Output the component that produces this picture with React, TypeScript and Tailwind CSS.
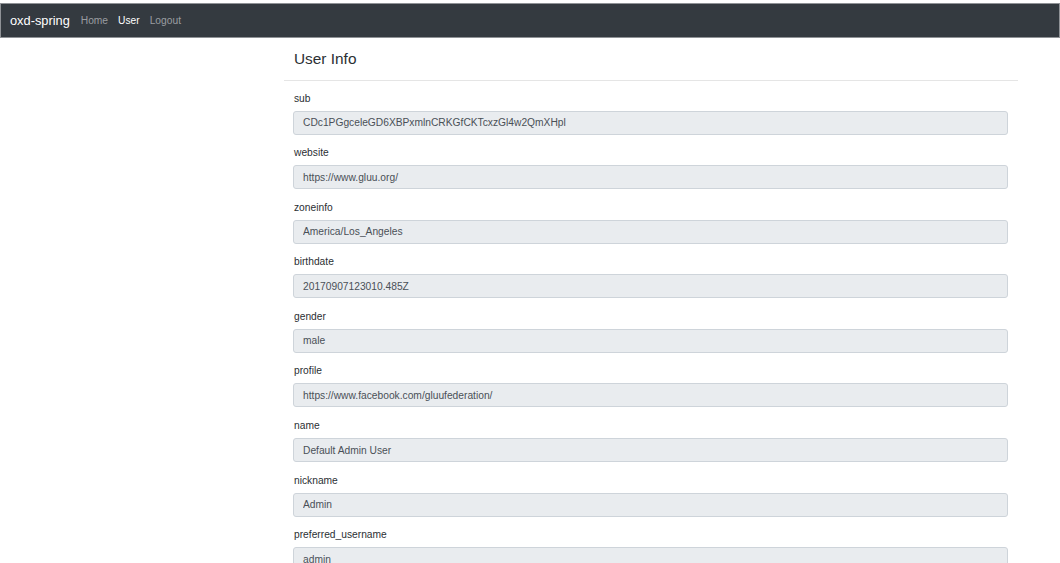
const fields: { label: string; value: string }[] = [
  { label: 'sub', value: 'CDc1PGgceleGD6XBPxmlnCRKGfCKTcxzGl4w2QmXHpl' },
  { label: 'website', value: 'https://www.gluu.org/' },
  { label: 'zoneinfo', value: 'America/Los_Angeles' },
  { label: 'birthdate', value: '20170907123010.485Z' },
  { label: 'gender', value: 'male' },
  { label: 'profile', value: 'https://www.facebook.com/gluufederation/' },
  { label: 'name', value: 'Default Admin User' },
  { label: 'nickname', value: 'Admin' },
  { label: 'preferred_username', value: 'admin' },
];

function Navbar() {
  return (
    <nav className="mt-[3px] h-[35px] border border-[#8f9296] bg-[#343a40] flex items-center pl-[9px]">
      <span className="text-[12.8px] text-white mr-[6px]">oxd-spring</span>
      <a className="px-[5px] text-[10.24px] text-[#9a9da0]">Home</a>
      <a className="px-[5px] text-[10.24px] text-white">User</a>
      <a className="px-[5px] text-[10.24px] text-[#9a9da0]">Logout</a>
    </nav>
  );
}

export default function App() {
  return (
    <div
      className="h-[563px] overflow-hidden bg-white text-[#212529]"
      style={{ fontFamily: '"Liberation Sans", Arial, sans-serif' }}
    >
      <Navbar />
      <div className="ml-[284px] w-[734px]">
        <h4 className="pl-[10px] pt-[11px] pb-[11px] text-[15.4px] leading-[20px] text-[#2b2f33]">User Info</h4>
        <hr className="border-0 border-t border-[#e5e5e5]" />
        <form className="pl-[9px] pr-[10px] pt-[9.5px]">
          {fields.map((f) => (
            <div key={f.label} className="mb-[10.6px]">
              <label className="block pl-px h-[15px] leading-[15px] mb-[5px] text-[10.24px] text-[#2b2f33]">
                {f.label}
              </label>
              <input
                readOnly
                value={f.value}
                className="block w-full h-[24px] rounded-[3px] border border-[#ced4da] bg-[#e9ecef] px-[9px] text-[10.24px] text-[#495057] outline-none"
              />
            </div>
          ))}
        </form>
      </div>
    </div>
  );
}
